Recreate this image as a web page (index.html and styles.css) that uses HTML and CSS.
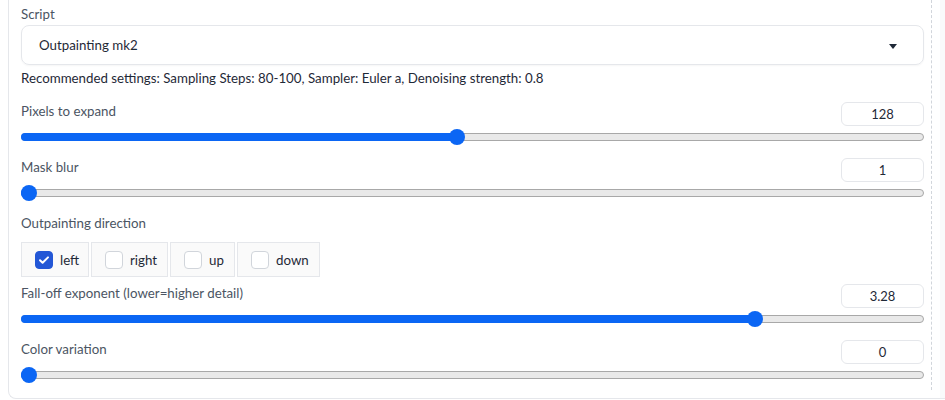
FILE: index.html
```html
<!DOCTYPE html>
<html>
<head>
<meta charset="utf-8">
<link rel="stylesheet" href="styles.css">
</head>
<body>
<div class="panel">
  <div class="col">
    <div class="label">Script</div>
    <div class="dropdown">
      <span class="dd-value">Outpainting mk2</span>
      <span class="dd-arrow"></span>
    </div>
    <div class="note">Recommended settings: Sampling Steps: 80-100, Sampler: Euler a, Denoising strength: 0.8</div>

    <div class="block first">
      <div class="row"><span class="label">Pixels to expand</span><div class="num">128</div></div>
      <div class="range" style="--p:0.484"><div class="track"><div class="fill"></div><div class="thumb"></div></div></div>
    </div>

    <div class="block">
      <div class="row"><span class="label">Mask blur</span><div class="num">1</div></div>
      <div class="range" style="--p:0"><div class="track"><div class="fill"></div><div class="thumb"></div></div></div>
    </div>

    <div class="label dir-label">Outpainting direction</div>
    <div class="checks">
      <label class="check w-left"><span class="box on"><svg viewBox="0 0 18 18" width="18" height="18"><path d="M5 9.2l2.6 2.6L13 6.4" fill="none" stroke="#fff" stroke-width="2" stroke-linecap="round" stroke-linejoin="round"/></svg></span>left</label>
      <label class="check w-right"><span class="box"></span>right</label>
      <label class="check w-up"><span class="box"></span>up</label>
      <label class="check w-down"><span class="box"></span>down</label>
    </div>

    <div class="block falloff">
      <div class="row"><span class="label">Fall-off exponent (lower=higher detail)</span><div class="num">3.28</div></div>
      <div class="range" style="--p:0.82"><div class="track"><div class="fill"></div><div class="thumb"></div></div></div>
    </div>

    <div class="block">
      <div class="row"><span class="label">Color variation</span><div class="num">0</div></div>
      <div class="range" style="--p:0"><div class="track"><div class="fill"></div><div class="thumb"></div></div></div>
    </div>
  </div>
  <div class="side"></div>
</div>
</body>
</html>
```
FILE: styles.css
```css
* { box-sizing: border-box; }
body {
  margin: 0;
  background: #fff;
  font-family: Lato, "Noto Sans", sans-serif;
  font-size: 13.3px;
  color: #1f2937;
}
.panel {
  margin-left: 8px;
  height: 399px;
  border-left: 1px solid #e5e7eb;
  border-bottom: 1px solid #e5e7eb;
  border-bottom-left-radius: 8px;
  display: flex;
}
.col {
  width: 923px;
  height: 390px;
  padding: 5px 7px 0 12px;
  border-right: 1px dashed #d1d5db;
}
.side {
  flex: 1;
  margin-left: 8px;
  background: #f9fafb;
}
.label {
  display: block;
  line-height: 18px;
  color: #4b5563;
}
.dropdown {
  margin-top: 2px;
  height: 40px;
  border: 1px solid #e5e7eb;
  border-radius: 8px;
  box-shadow: 0 1px 2px rgba(0,0,0,0.04);
  display: flex;
  align-items: center;
  justify-content: space-between;
  padding: 0 26px 0 17px;
  color: #1f2937;
}
.dd-arrow {
  width: 0;
  height: 0;
  border-left: 4px solid transparent;
  border-right: 4px solid transparent;
  border-top: 5px solid #1f2937;
  margin-top: 3px;
}
.note {
  margin-top: 4px;
  line-height: 18px;
  color: #1f2937;
}
.block { margin-bottom: 13px; }
.block.first { margin-top: 15px; }
.row {
  display: flex;
  justify-content: space-between;
  align-items: flex-start;
  height: 24px;
}
.num {
  width: 83px;
  height: 24px;
  border: 1px solid #e5e7eb;
  border-radius: 6px;
  text-align: center;
  line-height: 22px;
  color: #1f2937;
  font-size: 13px;
}
.range {
  margin-top: 3px;
  height: 16px;
  display: flex;
  align-items: center;
}
.track {
  position: relative;
  flex: 1;
  height: 8px;
  border: 1px solid #a8a8a8;
  border-radius: 4px;
  background: #e9e9e9;
}
.fill {
  position: absolute;
  left: -1px;
  top: -1px;
  bottom: -1px;
  width: calc(8px + var(--p) * (100% - 16px));
  background: #0b66f4;
  border-radius: 4px 0 0 4px;
}
.thumb {
  position: absolute;
  top: -5px;
  left: calc(var(--p) * (100% - 16px) - 1px);
  width: 16px;
  height: 16px;
  border-radius: 50%;
  background: #0b66f4;
}
.dir-label { margin-top: 13px; }
.checks {
  margin-top: 10px;
  display: flex;
  gap: 2px;
}
.check {
  height: 35px;
  display: flex;
  align-items: center;
  gap: 7px;
  padding-left: 13px;
  border: 1px solid #e5e7eb;
  background: #fafafa;
  color: #1f2937;
}
.w-left { width: 68px; }
.w-right { width: 77px; }
.w-up { width: 65px; }
.w-down { width: 83px; }
.box {
  width: 18px;
  height: 18px;
  border: 1px solid #d1d5db;
  border-radius: 4px;
  background: #fff;
  display: flex;
}
.box.on {
  background: #2357d6;
  border-color: #2357d6;
}
.box svg { margin: -1px; }
.falloff { margin-top: 7px; }
```
